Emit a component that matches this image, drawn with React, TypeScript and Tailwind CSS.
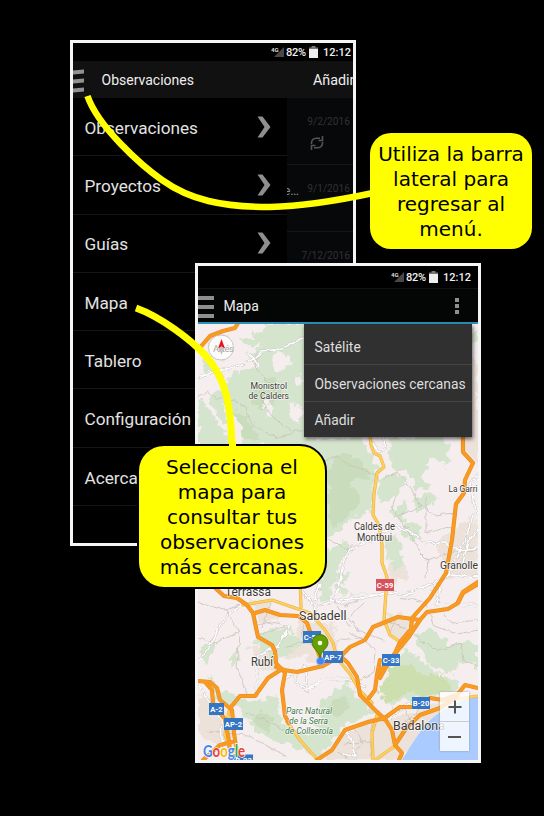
import { ReactNode } from "react";
import clsx from "clsx";

const MENU = ["Observaciones", "Proyectos", "Guías", "Mapa", "Tablero", "Configuración", "Acerca de"];

const GREEN = [
  "M262 324 L310 324 L310 440 L340 437 L362 440 L371 455 L378 468 L372 488 L370 512 L352 520 L334 536 L322 540 L318 500 L270 445 L244 447 L238 422 L222 424 L210 400 L218 388 L231 391 L241 372 L259 366 L250 354 L262 346 L270 335Z",
  "M198 398 L210 410 L221 428 L232 447 L198 450Z",
  "M205 356 L212 361 L224 379 L207 373Z",
  "M241 339 L258 333 L266 324 L280 324 L270 344 L252 347Z",
  "M226 376 L240 371 L248 386 L236 404 L224 394Z",
  "M389 437 L440 437 L450 446 L447 466 L430 457 L420 478 L433 488 L416 491 L410 473 L392 468Z",
  "M378 478 L394 473 L408 482 L396 494 L380 504Z",
  "M410 499 L428 492 L438 500 L419 512Z",
  "M392 508 L407 502 L404 522 L393 518Z",
  "M400 525 L412 519 L424 530 L414 541 L401 535Z",
  "M320 552 L344 541 L350 552 L338 568 L330 600 L320 603Z",
  "M383 536 L397 538 L404 559 L398 574 L390 560Z",
  "M335 570 L350 574 L338 588Z",
  "M255 642 L273 628 L290 632 L302 642 L287 654 L272 660Z",
  "M228 660 L237 652 L240 662 L231 668Z",
  "M200 650 L212 640 L214 650 L204 666Z",
  "M206 675 L222 690 L249 702 L276 698 L280 715 L285 728 L312 735 L322 700 L348 682 L358 697 L374 712 L345 724 L318 757 L294 748 L258 735 L238 706 L214 700Z",
  "M414 636 L430 628 L452 646 L470 640 L478 645 L478 668 L461 663 L448 675 L430 666 L420 650Z",
  "M403 645 L421 661 L436 673 L460 682 L455 694 L415 697 L388 708 L382 692 L391 673Z",
  "M472 332 L478 330 L478 345 L472 340Z",
  "M430 583 L440 588 L432 594Z",
  "M338 585 L350 590 L344 596Z",
];

const CLEARINGS = [
  "M272 356 L284 352 L292 362 L280 372 L270 366Z",
  "M262 402 L268 398 L274 410 L268 418Z",
  "M290 402 L304 410 L300 424 L288 416Z",
  "M224 404 L232 410 L242 428 L236 434 L226 418Z",
  "M294 378 L302 374 L303 384 L296 386Z",
];

const DARK_GREEN = [
  "M326 470 L340 452 L361 459 L369 476 L350 482 L363 500 L348 515 L331 528Z",
  "M250 390 L272 378 L282 393 L270 411 L253 406Z",
  "M234 410 L247 416 L260 439 L243 438Z",
  "M258 711 L274 717 L270 732 L254 725Z",
  "M325 705 L340 696 L350 708 L336 718Z",
];

const RESERVE = "M390 668 L412 664 L420 676 L443 674 L451 691 L430 695 L406 693 L385 706 L380 692Z";

const URBAN = [
  "M248 598 L270 603 L278 618 L260 624Z",
  "M301 620 L333 624 L336 645 L322 670 L304 657 L284 660Z",
  "M248 645 L274 652 L278 671 L263 673Z",
  "M383 610 L416 622 L402 643 L390 636Z",
  "M436 544 L472 515 L478 531 L476 577 L450 574Z",
  "M456 437 L478 437 L478 462 L468 454Z",
  "M464 356 L478 362 L478 437 L463 437Z",
  "M343 733 L375 717 L398 716 L423 707 L457 695 L415 742 L403 760 L325 760Z",
  "M210 338 L223 334 L231 350 L222 360 L211 354Z",
  "M199 695 L221 704 L233 735 L218 744 L198 731Z",
  "M385 566 L400 560 L408 576 L394 584Z",
];

const BOUNDARIES = [
  "M198 397 L208 392 L217 399 L226 397 L245 406 L252 425 L267 433 L278 438 L298 430 L310 433",
  "M257 357 L255 367 L266 379 L262 400 L270 413 L290 431",
  "M322 462 L338 456 L349 465 L365 470 L377 477",
  "M320 537 L340 545 L352 551",
  "M384 478 L397 472 L408 484 L421 506 L434 515 L456 513",
  "M396 495 L392 509 L408 530 L418 550 L428 560 L426 577",
  "M426 496 L426 533 L440 528 L454 529",
  "M394 518 L421 506",
  "M426 560 L454 552 L478 550",
  "M198 602 L224 610 L240 605 M226 610 L240 635 L237 667 L247 695",
  "M198 638 L214 644 L230 635 L238 633",
  "M349 632 L364 640 L376 651 L374 672 L360 680",
  "M364 603 L349 617 L357 630 L384 640",
  "M400 600 L412 598 L426 604 L434 626 L457 634 L478 630",
  "M440 609 L452 623 L478 620",
  "M416 637 L438 651 L461 643 L463 661 L478 665",
  "M256 625 L279 622 L291 628 M258 635 L285 626 M270 603 L262 628",
  "M304 624 L302 642 L286 647 M300 642 L324 645",
  "M246 713 L263 719 L285 730 M206 731 L247 735 L286 756",
  "M354 728 L363 743 L353 755 M372 722 L371 757 M345 744 L372 741 M338 752 L348 759",
  "M388 620 L407 630 M397 615 L390 633",
  "M358 600 L344 607 M333 600 L350 626 M337 640 L370 637",
  "M424 699 L416 714 L396 728 M403 707 L411 721",
];

const MINOR = [
  "M198 378 L214 372 L234 367 L254 359 L262 351 L281 349 L300 339 L310 336",
  "M254 359 L247 353 M254 359 L259 367",
  "M370 439 L379 452 L386 448 L383 437",
  "M320 605 L334 601 L340 581 L343 563 L350 548 L365 543 L382 533 L396 526 L412 533 L425 542 L445 543 L457 550 L478 548",
  "M478 475 L470 483 L473 500 L478 515 M473 515 L466 538 L455 560 L448 578 M478 530 L468 542 L461 569",
  "M339 600 L360 598 L391 593 L405 595 L421 588 L436 582 L452 574 L478 577",
  "M198 662 L212 643 L220 625 L234 609 L243 605",
  "M257 696 L257 664 L259 655 L278 646 L290 626",
  "M296 674 L296 682 L306 690 L323 679 L348 679 L365 687",
  "M286 678 L306 667 M306 667 L307 691",
  "M385 721 L409 703 L431 697 M400 737 L412 719",
  "M345 731 L351 738 L356 757 L343 754",
  "M300 590 L316 607 L315 622 M315 600 L320 584",
  "M330 600 L344 604 L353 595 L384 595 M440 587 L437 605 L478 605",
  "M198 684 L211 704 L221 719 L223 756",
];

const YELLOW = [
  "M370 435 L371 445 L374 453 L380 456 L384 467 L377 473 L374 494 L373 515 L379 525 L382 545 L382 563 L387 577 L386 592 L384 620 L390 635 L400 642",
  "M243 605 L272 600 L292 607 L310 613 L325 630 L333 643 L337 658 L350 674 L360 691 L372 703",
  "M300 580 L301 607",
  "M287 722 L293 730 L300 740 L306 747 L318 760",
  "M229 711 L225 735 L234 760",
  "M378 712 L372 733 L373 760 M395 746 L375 760",
  "M457 699 L478 696",
];

const MOTORWAYS = [
  "M198 350 L210 336 L223 331 L235 328 L238 323",
  "M213 586 L224 596 L237 598 L247 605 L253 613 L258 637 L272 645 L275 651 L276 663 L285 673 L282 690 L285 716 L289 723",
  "M255 613 L265 610 L280 615 L298 616 L307 623 L312 637 L320 657",
  "M276 667 L284 670 L297 672 L323 666 L342 655 L350 647 L365 640 L373 627 L398 617 L420 620 L427 612 L448 609 L458 603 L463 593 L478 584",
  "M337 653 L348 663 L357 677 L360 695 L377 712 L385 719 L392 730 L395 745 L402 753 L399 760",
  "M463 437 L463 452 L473 463 L465 480 L464 493 L456 504 L452 540 L446 573 L430 598 L412 618 L411 629 L400 642 L395 653 L377 675 L375 690 L369 698",
  "M420 620 L408 638 L398 650 L386 667 L380 678",
  "M478 582 L463 592 L458 602",
  "M380 660 L377 675",
  "M383 719 L400 707 L413 707 L430 698 L443 700 L457 695 L465 685 L478 688",
  "M395 745 L407 727 L420 715 L440 708 L457 697",
  "M317 760 L332 750 L345 730 L368 722 L385 718",
  "M198 681 L210 682 L217 688 L220 700 L232 710 L234 733 L237 753 L238 760",
  "M205 682 L212 690 L213 703 L219 712 L225 719 L229 741 L231 760",
  "M282 669 L268 678 L255 696 L240 696 L231 707",
  "M203 760 L220 745 L232 742",
];

type Sign = { x: number; y: number; w: number; t: string; red?: boolean };
const SIGNS: Sign[] = [
  { x: 376, y: 579, w: 18, t: "C-59", red: true },
  { x: 303, y: 631, w: 18, t: "C-58" },
  { x: 323, y: 651, w: 20, t: "AP-7" },
  { x: 382, y: 654, w: 18, t: "C-33" },
  { x: 412, y: 697, w: 18, t: "B-20" },
  { x: 209, y: 703, w: 15, t: "A-2" },
  { x: 224, y: 718, w: 19, t: "AP-2" },
  { x: 234, y: 754.5, w: 19, t: "B-23" },
];

type Place = { x: number; y: number; w: number; s: number; t: string; park?: boolean };
const PLACES: Place[] = [
  { x: 250.5, y: 388.5, w: 36.5, s: 9.3, t: "Monistrol" },
  { x: 248.5, y: 398.5, w: 40.5, s: 9.3, t: "de Calders" },
  { x: 448.5, y: 492, w: 29, s: 9.3, t: "La Garri" },
  { x: 354, y: 529.5, w: 41, s: 10, t: "Caldes de" },
  { x: 357, y: 540.5, w: 35, s: 10, t: "Montbui" },
  { x: 440, y: 569, w: 38, s: 11, t: "Granolle" },
  { x: 225, y: 596, w: 46, s: 12.5, t: "Terrassa" },
  { x: 299, y: 620, w: 47.5, s: 12.5, t: "Sabadell" },
  { x: 251, y: 665.5, w: 22, s: 12.5, t: "Rubí" },
  { x: 393, y: 729.5, w: 52, s: 12.5, t: "Badalona" },
  { x: 286, y: 714, w: 46, s: 9, t: "Parc Natural", park: true },
  { x: 289, y: 724, w: 39, s: 9, t: "de la Serra", park: true },
  { x: 285, y: 734, w: 48, s: 9, t: "de Collserola", park: true },
];

function MapView() {
  return (
    <svg viewBox="198 324 280 436" className="block h-[436px] w-[280px]" fontFamily="Roboto, sans-serif">
      <defs>
        <filter id="rough" x="-5%" y="-5%" width="110%" height="110%">
          <feTurbulence type="fractalNoise" baseFrequency="0.12" numOctaves="3" seed="4" />
          <feDisplacementMap in="SourceGraphic" scale="13" xChannelSelector="R" yChannelSelector="G" />
        </filter>
        <filter id="wobble" x="-5%" y="-5%" width="110%" height="110%">
          <feTurbulence type="fractalNoise" baseFrequency="0.15" numOctaves="2" seed="9" />
          <feDisplacementMap in="SourceGraphic" scale="5" xChannelSelector="R" yChannelSelector="G" />
        </filter>
      </defs>
      <rect x="198" y="324" width="280" height="436" fill="#f5edee" />
      <g filter="url(#rough)">
        {URBAN.map((d) => <path key={d} d={d} fill="#ece2da" />)}
        {GREEN.map((d) => <path key={d} d={d} fill="#d5e5cd" />)}
        {DARK_GREEN.map((d) => <path key={d} d={d} fill="#c9ddbc" />)}
        {CLEARINGS.map((d) => <path key={d} d={d} fill="#f5edee" />)}
        <path d={RESERVE} fill="#cddfae" />
      </g>
      <path d="M402 760 L410 747 L418 735 L427 723 L435 716 L443 710 L463 700 L478 697 V760Z" fill="#a9cbff" />
      <g fill="none" strokeLinejoin="round" strokeLinecap="round">
        <g filter="url(#wobble)">
          {BOUNDARIES.map((d) => <path key={d} d={d} stroke="#c8c0b9" strokeWidth="0.8" />)}
          {MINOR.map((d) => <path key={d} d={d} stroke="#c9c6c4" strokeWidth="2.6" />)}
          {MINOR.map((d) => <path key={d + "w"} d={d} stroke="#fff" strokeWidth="1.5" />)}
        </g>
        {YELLOW.map((d) => <path key={d} d={d} stroke="#e7ad45" strokeWidth="3.2" />)}
        {YELLOW.map((d) => <path key={d + "i"} d={d} stroke="#ffcf5c" strokeWidth="2.2" />)}
        {MOTORWAYS.map((d) => <path key={d} d={d} stroke="#e98b1d" strokeWidth="4.1" />)}
        {MOTORWAYS.map((d) => <path key={d + "i"} d={d} stroke="#f99a22" strokeWidth="3" />)}
      </g>
      {PLACES.map((p) => (
        <text
          key={p.t}
          x={p.x}
          y={p.y}
          fontSize={p.s}
          textLength={p.w}
          lengthAdjust="spacingAndGlyphs"
          fontStyle={p.park ? "italic" : "normal"}
          fill={p.park ? "#3f7a4b" : "#3c3835"}
          stroke="#fff"
          strokeOpacity="0.7"
          strokeWidth="1.5"
          paintOrder="stroke"
        >
          {p.t}
        </text>
      ))}
      {SIGNS.map((s) => (
        <g key={s.t}>
          <rect x={s.x} y={s.y} width={s.w} height="12" fill={s.red ? "#d8525b" : "#3476c5"} />
          <text x={s.x + s.w / 2} y={s.y + 8.8} fontSize="7.6" fontWeight="700" textAnchor="middle" fill="#fff">{s.t}</text>
        </g>
      ))}
      <circle cx="320.5" cy="661" r="4" fill="#4285f4" stroke="#9dbdf5" strokeWidth="0.8" />
      <path d="M320 658 C319 650 312 649 312 642.5 A8 8 0 0 1 328 642.5 C328 649 321 650 320 658Z" fill="#65a000" stroke="#3f6f00" strokeWidth="0.8" />
      <circle cx="320" cy="643" r="2.3" fill="#fff" />
      <circle cx="221" cy="347.500" r="12.5" fill="#fff" fillOpacity="0.85" stroke="#bbb" strokeWidth="0.8" />
      <text x="213" y="352" fontSize="9.5" fill="#aaa" textLength="21">Artés</text>
      <path d="M221.5 339 L225 348.5 L221.5 346.5 L218 348.5Z" fill="#e8141c" />
      <path d="M221.5 346.5 L224 348.5 L221.5 355 L219 348.5Z" fill="#c4c4c4" />
      <text x="203" y="756.5" fontSize="17" fontFamily="Lato, sans-serif" fontWeight="700" textLength="42" lengthAdjust="spacingAndGlyphs" stroke="#fff" strokeWidth="1.4" paintOrder="stroke">
        <tspan fill="#4285f4">G</tspan>
        <tspan fill="#ea4335">o</tspan>
        <tspan fill="#fbbc05">o</tspan>
        <tspan fill="#4285f4">g</tspan>
        <tspan fill="#34a853">l</tspan>
        <tspan fill="#ea4335">e</tspan>
      </text>
    </svg>
  );
}

function StatusBar({ className }: { className: string }) {
  return (
    <div className={clsx("flex items-center justify-end bg-black text-[11px] font-medium leading-none text-[#eee]", className)}>
      <svg viewBox="0 0 13 12" className="mr-0.5 h-3 w-[13px]">
        <path d="M13 1 V11 H3Z" fill="#484848" />
        <text x="0" y="5.5" fontSize="6" fontWeight="700" fontFamily="Roboto, sans-serif" fill="#ddd">4G</text>
      </svg>
      <span className="w-[20px] tracking-[-0.2px] whitespace-nowrap">82%</span>
      <svg viewBox="0 0 9 12" className="ml-[3px] mr-[5px] h-3 w-[9px]">
        <path d="M0 1.5 H2.5 V0 H6.5 V1.5 H9 V12 H0Z" fill="#777" />
        <path d="M0 3 H9 V12 H0Z" fill="#eee" />
      </svg>
      <span className="w-7 whitespace-nowrap">12:12</span>
    </div>
  );
}

function Chevron() {
  return (
    <svg viewBox="0 0 14 22" className="mb-1 h-[22px] w-[14px]">
      <path d="M0.5 0.5 H5.500 L13.5 11 L5.500 21.5 H0.500 L7.500 11Z" fill="#8f8f8f" />
    </svg>
  );
}

function Callout({ lines, className }: { lines: string[]; className: string }) {
  return (
    <div className={clsx("absolute flex flex-col items-center bg-[#ffff00] text-[20px] leading-[25px] whitespace-nowrap text-black", className)} style={{ fontFamily: '"DejaVu Sans", sans-serif' }}>
      {lines.map((l) => <span key={l}>{l}</span>)}
    </div>
  );
}

function Entry({ date, children }: { date: string; children?: ReactNode }) {
  return (
    <div className="relative h-[67px] border-b border-[#15171a] pt-[18px] pr-[3px] text-right text-[10.2px] leading-3 whitespace-nowrap text-[#303234]">
      {date}
      {children}
    </div>
  );
}

function ObservationsScreen() {
  return (
    <section className="absolute top-[40px] left-[70px] flex h-[506px] w-[286px] flex-col overflow-hidden border-[3px] border-[#f5f5f5] bg-black">
      <StatusBar className="h-[18px] shrink-0 pr-0.5" />
      <header className="flex h-[37px] shrink-0 items-center bg-[#111] text-[#eee]">
        <div className="flex w-[11px] flex-col gap-[5px] pt-0.5">
          <i className="h-1 -skew-y-6 bg-[#929292]" />
          <i className="h-1 -skew-y-6 bg-[#929292]" />
          <i className="h-1 -skew-y-6 bg-[#929292]" />
        </div>
        <h1 className="ml-[17.5px] flex-1 pt-[2px] text-[14px]">Observaciones</h1>
        <span className="w-10 pt-[2px] text-[14.3px] whitespace-nowrap">Añadir</span>
      </header>
      <div className="flex min-h-0 flex-1">
        <nav className="flex w-[214px] shrink-0 flex-col bg-black">
          {MENU.map((m) => (
            <div key={m} className="flex h-[58.3px] items-center justify-between border-b border-[#161616] pt-[4px] pr-4 pl-[11.5px] text-[17.2px] text-[#e2e2e2]">
              {m}
              <Chevron />
            </div>
          ))}
        </nav>
        <div className="flex-1 bg-[#07080a]">
          <Entry date="9/2/2016">
            <svg viewBox="0 0 14 14" className="mt-2 mr-[26px] ml-auto h-3.5 w-3.5" fill="none" stroke="#555" strokeWidth="1.6">
              <path d="M1.5 8 V6.5 Q2 2.5 6 2.2 H10 M12.5 6 V7.5 Q12 11.5 8 11.8 H4" />
              <path d="M12.5 0 V4.5 H8.5 M1.5 14 V9.5 H5.5" />
            </svg>
          </Entry>
          <Entry date="9/1/2016">
            <span className="absolute top-[20px] left-0 w-3 overflow-hidden text-[13px] text-[#888]">
              <span className="-ml-[5px] inline-block">e…</span>
            </span>
          </Entry>
          <Entry date="7/12/2016" />
        </div>
      </div>
    </section>
  );
}

function MapScreen() {
  return (
    <section className="absolute top-[263px] left-[195px] flex h-[500px] w-[286px] flex-col overflow-hidden border-[3px] border-[#f5f5f5] bg-black">
      <StatusBar className="h-[22px] shrink-0 pr-[7px]" />
      <header className="flex h-[36px] shrink-0 items-center border-t border-b-2 border-t-[#111] border-b-[#2b91b9] bg-[#040505] text-[#eee]">
        <div className="flex w-4 flex-col gap-[5px] pt-0.5">
          <i className="h-1 bg-[#8f8f8f]" />
          <i className="h-1 bg-[#8f8f8f]" />
          <i className="h-1 bg-[#8f8f8f]" />
        </div>
        <h1 className="ml-[9.5px] flex-1 pt-0.5 text-[14px]">Mapa</h1>
        <div className="mr-[19px] flex flex-col gap-0.5">
          <i className="size-1 bg-[#8f8f8f]" />
          <i className="size-1 bg-[#8f8f8f]" />
          <i className="size-1 bg-[#8f8f8f]" />
        </div>
      </header>
      <MapView />
      <div className="absolute top-[58px] left-[106px] flex h-[113px] w-[168px] flex-col bg-[#303030] text-[13.85px] whitespace-nowrap text-[#dedede] shadow-[1px_2px_4px_#0009]">
        <div className="flex h-[41px] items-center border-b border-[#444] pt-1.5 pl-[10.5px]">Satélite</div>
        <div className="flex h-[37px] items-center border-b border-[#444] pt-0.5 pl-[10.5px]">Observaciones cercanas</div>
        <div className="flex flex-1 items-center pt-0.5 pl-[10.5px]">Añadir</div>
      </div>
      <div className="absolute top-[426px] left-[242px] flex h-[59px] w-[29px] flex-col bg-white/80 text-[#555] shadow-[0_0_2px_#999]">
        <div className="flex flex-1 items-center justify-center border-b border-[#ccc]">
          <svg viewBox="0 0 14 14" className="size-3.5"><path d="M6 0.5 H8 V6 H13.5 V8 H8 V13.5 H6 V8 H0.5 V6 H6Z" fill="currentColor" /></svg>
        </div>
        <div className="flex flex-1 items-center justify-center">
          <i className="h-0.5 w-[13px] bg-[#555]" />
        </div>
      </div>
    </section>
  );
}

export default function App() {
  return (
    <main className="relative h-[816px] w-[544px] overflow-hidden bg-black" style={{ fontFamily: "Roboto, sans-serif" }}>
      <ObservationsScreen />
      <MapScreen />
      <svg viewBox="0 0 544 816" className="absolute inset-0 h-[816px] w-[544px]" fill="none" stroke="#ffff00">
        <path d="M87.5 96 C98 127 142 166 162 180 C190 200 222 207 270 207 C310 206 345 199 373 193" strokeWidth="6.5" />
        <path d="M136 308 C161 317 190 339 205 355 C226 378 231 405 232 448" strokeWidth="7" />
      </svg>
      <Callout lines={["Utiliza la barra", "lateral para", "regresar al", "menú."]} className="top-[133px] left-[370px] h-[116px] w-[162px] rounded-[21px] pt-[9px]" />
      <Callout lines={["Selecciona el", "mapa para", "consultar tus", "observaciones", "más cercanas."]} className="top-[444px] left-[137px] h-[145px] w-[190px] rounded-[27px] border-2 border-black pt-[9px]" />
      <i className="absolute top-[442px] left-[228.5px] h-[6px] w-[7px] bg-[#ffff00]" />
    </main>
  );
}
